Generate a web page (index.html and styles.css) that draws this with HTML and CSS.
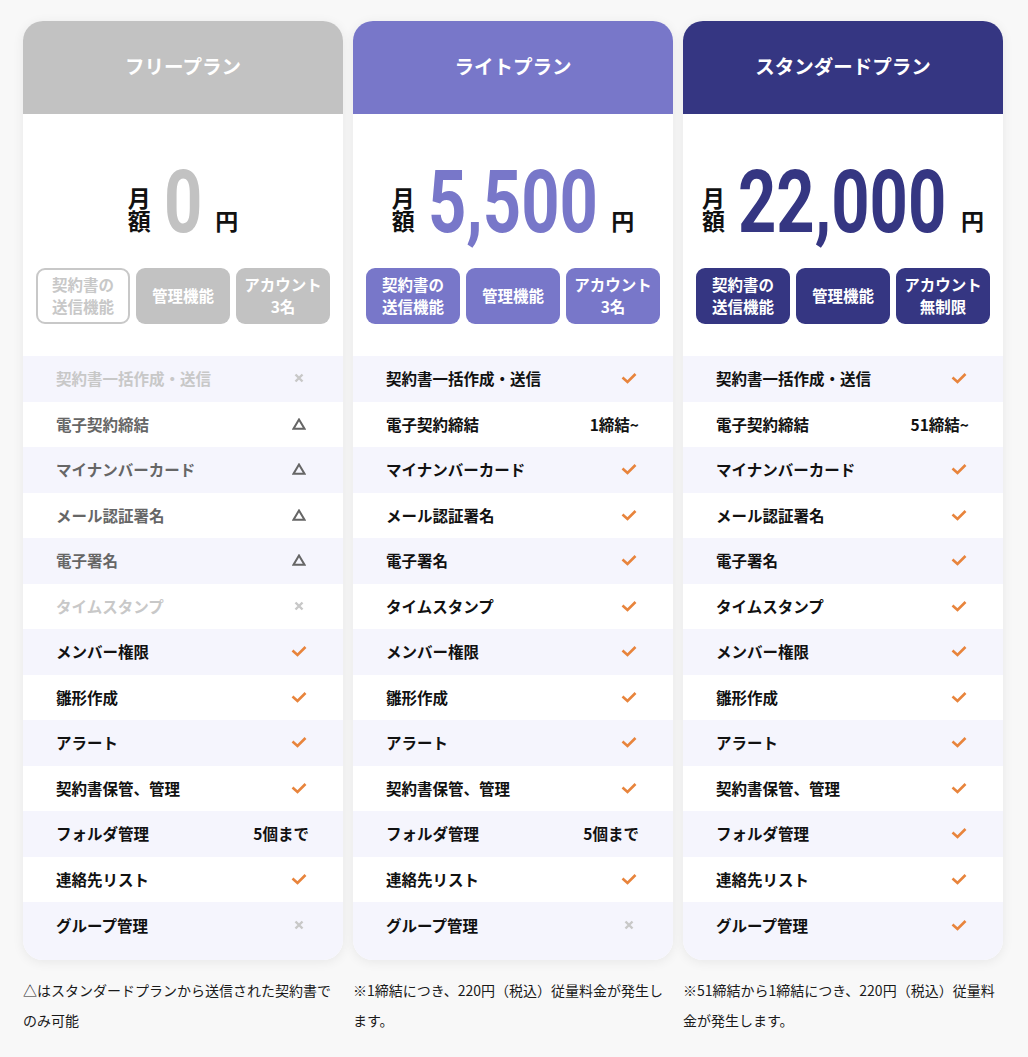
FILE: index.html
```html
<!DOCTYPE html>
<html lang="ja">
<head>
<meta charset="utf-8">
<link rel="stylesheet" href="styles.css">
</head>
<body>
<div class="plans">
  <!-- Free -->
  <section class="card plan-free">
    <h2 class="card-head">フリープラン</h2>
    <div class="price"><span class="price-label">月<br>額</span><span class="num"><span class="num-inner">0</span></span><span class="yen">円</span></div>
    <div class="tags">
      <div class="tag tag-outline">契約書の<br>送信機能</div>
      <div class="tag">管理機能</div>
      <div class="tag">アカウント<br>3名</div>
    </div>
    <ul class="rows">
      <li class="row off"><span>契約書一括作成・送信</span><span class="val"><svg class="ic-x" viewBox="0 0 10 10"><path d="M1.5 1.5l7 7M8.5 1.5l-7 7"/></svg></span></li>
      <li class="row part"><span>電子契約締結</span><span class="val"><svg class="ic-tri" viewBox="0 0 14 12"><path d="M7 1.5L12.5 10.8H1.5Z"/></svg></span></li>
      <li class="row part"><span>マイナンバーカード</span><span class="val"><svg class="ic-tri" viewBox="0 0 14 12"><path d="M7 1.5L12.5 10.8H1.5Z"/></svg></span></li>
      <li class="row part"><span>メール認証署名</span><span class="val"><svg class="ic-tri" viewBox="0 0 14 12"><path d="M7 1.5L12.5 10.8H1.5Z"/></svg></span></li>
      <li class="row part"><span>電子署名</span><span class="val"><svg class="ic-tri" viewBox="0 0 14 12"><path d="M7 1.5L12.5 10.8H1.5Z"/></svg></span></li>
      <li class="row off"><span>タイムスタンプ</span><span class="val"><svg class="ic-x" viewBox="0 0 10 10"><path d="M1.5 1.5l7 7M8.5 1.5l-7 7"/></svg></span></li>
      <li class="row"><span>メンバー権限</span><span class="val"><svg class="ic-check" viewBox="0 0 16 12"><path d="M1.5 5.5l5 4.5 8-8"/></svg></span></li>
      <li class="row"><span>雛形作成</span><span class="val"><svg class="ic-check" viewBox="0 0 16 12"><path d="M1.5 5.5l5 4.5 8-8"/></svg></span></li>
      <li class="row"><span>アラート</span><span class="val"><svg class="ic-check" viewBox="0 0 16 12"><path d="M1.5 5.5l5 4.5 8-8"/></svg></span></li>
      <li class="row"><span>契約書保管、管理</span><span class="val"><svg class="ic-check" viewBox="0 0 16 12"><path d="M1.5 5.5l5 4.5 8-8"/></svg></span></li>
      <li class="row"><span>フォルダ管理</span><span class="val text">5個まで</span></li>
      <li class="row"><span>連絡先リスト</span><span class="val"><svg class="ic-check" viewBox="0 0 16 12"><path d="M1.5 5.5l5 4.5 8-8"/></svg></span></li>
      <li class="row"><span>グループ管理</span><span class="val"><svg class="ic-x" viewBox="0 0 10 10"><path d="M1.5 1.5l7 7M8.5 1.5l-7 7"/></svg></span></li>
    </ul>
  </section>

  <!-- Lite -->
  <section class="card plan-lite">
    <h2 class="card-head">ライトプラン</h2>
    <div class="price"><span class="price-label">月<br>額</span><span class="num"><span class="num-inner">5,500</span></span><span class="yen">円</span></div>
    <div class="tags">
      <div class="tag">契約書の<br>送信機能</div>
      <div class="tag">管理機能</div>
      <div class="tag">アカウント<br>3名</div>
    </div>
    <ul class="rows">
      <li class="row"><span>契約書一括作成・送信</span><span class="val"><svg class="ic-check" viewBox="0 0 16 12"><path d="M1.5 5.5l5 4.5 8-8"/></svg></span></li>
      <li class="row"><span>電子契約締結</span><span class="val text">1締結~</span></li>
      <li class="row"><span>マイナンバーカード</span><span class="val"><svg class="ic-check" viewBox="0 0 16 12"><path d="M1.5 5.5l5 4.5 8-8"/></svg></span></li>
      <li class="row"><span>メール認証署名</span><span class="val"><svg class="ic-check" viewBox="0 0 16 12"><path d="M1.5 5.5l5 4.5 8-8"/></svg></span></li>
      <li class="row"><span>電子署名</span><span class="val"><svg class="ic-check" viewBox="0 0 16 12"><path d="M1.5 5.5l5 4.5 8-8"/></svg></span></li>
      <li class="row"><span>タイムスタンプ</span><span class="val"><svg class="ic-check" viewBox="0 0 16 12"><path d="M1.5 5.5l5 4.5 8-8"/></svg></span></li>
      <li class="row"><span>メンバー権限</span><span class="val"><svg class="ic-check" viewBox="0 0 16 12"><path d="M1.5 5.5l5 4.5 8-8"/></svg></span></li>
      <li class="row"><span>雛形作成</span><span class="val"><svg class="ic-check" viewBox="0 0 16 12"><path d="M1.5 5.5l5 4.5 8-8"/></svg></span></li>
      <li class="row"><span>アラート</span><span class="val"><svg class="ic-check" viewBox="0 0 16 12"><path d="M1.5 5.5l5 4.5 8-8"/></svg></span></li>
      <li class="row"><span>契約書保管、管理</span><span class="val"><svg class="ic-check" viewBox="0 0 16 12"><path d="M1.5 5.5l5 4.5 8-8"/></svg></span></li>
      <li class="row"><span>フォルダ管理</span><span class="val text">5個まで</span></li>
      <li class="row"><span>連絡先リスト</span><span class="val"><svg class="ic-check" viewBox="0 0 16 12"><path d="M1.5 5.5l5 4.5 8-8"/></svg></span></li>
      <li class="row"><span>グループ管理</span><span class="val"><svg class="ic-x" viewBox="0 0 10 10"><path d="M1.5 1.5l7 7M8.5 1.5l-7 7"/></svg></span></li>
    </ul>
  </section>

  <!-- Standard -->
  <section class="card plan-std">
    <h2 class="card-head">スタンダードプラン</h2>
    <div class="price"><span class="price-label">月<br>額</span><span class="num"><span class="num-inner">22,000</span></span><span class="yen">円</span></div>
    <div class="tags">
      <div class="tag">契約書の<br>送信機能</div>
      <div class="tag">管理機能</div>
      <div class="tag">アカウント<br>無制限</div>
    </div>
    <ul class="rows">
      <li class="row"><span>契約書一括作成・送信</span><span class="val"><svg class="ic-check" viewBox="0 0 16 12"><path d="M1.5 5.5l5 4.5 8-8"/></svg></span></li>
      <li class="row"><span>電子契約締結</span><span class="val text">51締結~</span></li>
      <li class="row"><span>マイナンバーカード</span><span class="val"><svg class="ic-check" viewBox="0 0 16 12"><path d="M1.5 5.5l5 4.5 8-8"/></svg></span></li>
      <li class="row"><span>メール認証署名</span><span class="val"><svg class="ic-check" viewBox="0 0 16 12"><path d="M1.5 5.5l5 4.5 8-8"/></svg></span></li>
      <li class="row"><span>電子署名</span><span class="val"><svg class="ic-check" viewBox="0 0 16 12"><path d="M1.5 5.5l5 4.5 8-8"/></svg></span></li>
      <li class="row"><span>タイムスタンプ</span><span class="val"><svg class="ic-check" viewBox="0 0 16 12"><path d="M1.5 5.5l5 4.5 8-8"/></svg></span></li>
      <li class="row"><span>メンバー権限</span><span class="val"><svg class="ic-check" viewBox="0 0 16 12"><path d="M1.5 5.5l5 4.5 8-8"/></svg></span></li>
      <li class="row"><span>雛形作成</span><span class="val"><svg class="ic-check" viewBox="0 0 16 12"><path d="M1.5 5.5l5 4.5 8-8"/></svg></span></li>
      <li class="row"><span>アラート</span><span class="val"><svg class="ic-check" viewBox="0 0 16 12"><path d="M1.5 5.5l5 4.5 8-8"/></svg></span></li>
      <li class="row"><span>契約書保管、管理</span><span class="val"><svg class="ic-check" viewBox="0 0 16 12"><path d="M1.5 5.5l5 4.5 8-8"/></svg></span></li>
      <li class="row"><span>フォルダ管理</span><span class="val"><svg class="ic-check" viewBox="0 0 16 12"><path d="M1.5 5.5l5 4.5 8-8"/></svg></span></li>
      <li class="row"><span>連絡先リスト</span><span class="val"><svg class="ic-check" viewBox="0 0 16 12"><path d="M1.5 5.5l5 4.5 8-8"/></svg></span></li>
      <li class="row"><span>グループ管理</span><span class="val"><svg class="ic-check" viewBox="0 0 16 12"><path d="M1.5 5.5l5 4.5 8-8"/></svg></span></li>
    </ul>
  </section>

  <p class="note">△はスタンダードプランから送信された契約書でのみ可能</p>
  <p class="note">※1締結につき、220円（税込）従量料金が発生します。</p>
  <p class="note">※51締結から1締結につき、220円（税込）従量料金が発生します。</p>
</div>
</body>
</html>
```

FILE: styles.css
```css
* { box-sizing: border-box; }
html, body {
  margin: 0;
  padding: 0;
  background: #f8f8f8;
}
body {
  font-family: "Noto Sans CJK JP", "Noto Sans", sans-serif;
  color: #1a1a1a;
}
.plans {
  display: grid;
  grid-template-columns: repeat(3, 320px);
  column-gap: 10px;
  padding: 21px 0 0 23px;
}
.card {
  background: #fff;
  border-radius: 20px;
  overflow: hidden;
  box-shadow: 0 2px 12px rgba(0,0,0,0.07);
}
.card-head {
  margin: 0;
  height: 93px;
  display: flex;
  align-items: center;
  justify-content: center;
  padding-bottom: 4px;
  color: #fff;
  font-size: 19.5px;
  font-weight: 700;
}
.plan-free { --c: #c2c2c2; }
.plan-lite { --c: #7877c9; }
.plan-std  { --c: #353682; }
.card-head { background: var(--c); }

.price {
  text-align: center;
  padding-top: 44px;
  height: 154px;
  line-height: 1;
  white-space: nowrap;
}
.price-label {
  display: inline-block;
  vertical-align: 2px;
  font-size: 23px;
  font-weight: 700;
  line-height: 23px;
  color: #111;
  margin-right: 13px;
}
.num {
  display: inline-block;
  vertical-align: baseline;
  font-family: Roboto, "Liberation Sans", sans-serif;
  font-weight: 700;
  font-size: 88px;
  line-height: 1;
  color: var(--c);
}
.num-inner {
  display: inline-block;
  transform: scaleX(0.76);
  transform-origin: left center;
}
.plan-free .num { margin-right: -12px; }
.plan-lite .num { margin-right: -53px; }
.plan-std .num { margin-right: -64px; }
.yen {
  display: inline-block;
  vertical-align: 2px;
  font-size: 23px;
  font-weight: 700;
  line-height: 23px;
  color: #111;
  margin-left: 13px;
}

.tags {
  display: grid;
  grid-template-columns: repeat(3, 94px);
  gap: 6px;
  padding: 0 13px;
}
.tag {
  height: 56px;
  border-radius: 9px;
  background: var(--c);
  color: #fff;
  font-size: 15.5px;
  font-weight: 700;
  line-height: 22px;
  text-align: center;
  display: flex;
  align-items: center;
  justify-content: center;
  padding-bottom: 2px;
  white-space: nowrap;
}
.tag-outline {
  background: #fff;
  border: 2px solid #c8c8c8;
  color: #c8c8c8;
}

.rows {
  list-style: none;
  margin: 32px 0 0;
  padding: 0;
}
.row {
  height: 45.5px;
  display: flex;
  align-items: center;
  justify-content: space-between;
  padding: 0 34px 1px 33px;
  font-size: 15.5px;
  font-weight: 700;
  color: #111;
}
.row:nth-child(odd) { background: #f5f5fd; }
.row:last-child { height: 57.5px; padding-bottom: 12px; }
.row.off { color: #c8c8c8; }
.row.part { color: #666; }
.val { display: flex; align-items: center; }
.val svg { fill: none; display: block; }
.ic-check {
  width: 16px; height: 12px;
  stroke: #e8843c; stroke-width: 2.6;
  margin-right: 2px;
}
.ic-x {
  width: 10px; height: 10px;
  stroke: #c8c8c8; stroke-width: 2.4;
  margin-right: 5px;
}
.ic-tri {
  width: 14px; height: 12px;
  stroke: #666; stroke-width: 2;
  stroke-linejoin: miter;
  margin-right: 3px;
}

.note {
  margin: 15px 0 0;
  font-size: 14px;
  line-height: 30px;
  color: #1a1a1a;
}
```
